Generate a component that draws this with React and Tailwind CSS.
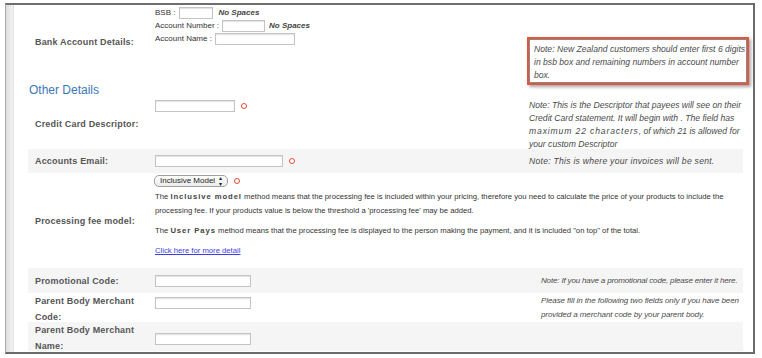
import React from 'react';

const font = { fontFamily: '"Liberation Sans", Arial, sans-serif' };

const Req = () => (
  <span className="inline-block w-[6px] h-[6px] rounded-full border-[1.5px] border-[#e8473a] bg-white ml-[6px] shrink-0" />
);

const Field = ({ w }) => (
  <span className={`inline-block ${w} h-[12px] bg-white border border-[#c4c4c4] shadow-[inset_0_1px_1px_rgba(0,0,0,0.12)] shrink-0`} />
);

const Label = ({ children }) => (
  <div className="w-[127px] shrink-0 pl-[7px] text-[9px] leading-[16px] font-bold tracking-[0.02em] text-[#555] whitespace-nowrap">
    {children}
  </div>
);

const Note = ({ children, className = '' }) => (
  <div className={`text-[8.6px] leading-[13px] italic text-[#4a4a4a] whitespace-nowrap ${className}`}>{children}</div>
);

const Mono = ({ children }) => (
  <span className="tracking-[0.12em] font-bold text-[#444]">{children}</span>
);

export default function App() {
  return (
    <div className="w-[762px] h-[358px] bg-white overflow-hidden" style={font}>
      <div className="ml-[5px] mt-[3px] w-[750px] h-[351px] border-t-2 border-r-2 border-b-2 border-l border-t-[#6e6e6e] border-r-[#6a6a6a] border-b-[#6a6a6a] border-l-[#a8a8a8] flex overflow-hidden">
        {/* left shade strip */}
        <div className="w-[8px] shrink-0 bg-gradient-to-r from-[#dedede] to-[#f2f2f2] border-r border-[#e2e2e2]" />

        <div className="flex-1 pl-[14px]">
          <div className="w-[715px]">
            {/* bank account */}
            <div className="flex h-[74px]">
              <div className="self-center shrink-0"><Label>Bank Account Details:</Label></div>
              <div className="w-[372px] shrink-0 pt-[1px] text-[8px] text-[#333]">
                <div className="flex items-center h-[13px]">
                  <span>BSB :</span>
                  <span className="ml-[4px] flex"><Field w="w-[34px]" /></span>
                  <span className="ml-[5px] italic font-semibold text-[#444]">No Spaces</span>
                </div>
                <div className="flex items-center h-[13px]">
                  <span>Account Number :</span>
                  <span className="ml-[3px] flex"><Field w="w-[43px]" /></span>
                  <span className="ml-[4px] italic font-semibold text-[#444]">No Spaces</span>
                </div>
                <div className="flex items-center h-[13px]">
                  <span>Account Name :</span>
                  <span className="ml-[3px] flex"><Field w="w-[80px]" /></span>
                </div>
              </div>
              <div className="w-[222px] shrink-0 mt-[32px]">
                <div className="border-2 border-[#e4553d] shadow-[2px_2px_3px_rgba(0,0,0,0.35)]">
                  <div className="border border-[#8a8a8a] h-[44px] pl-[4px] pt-[3px]">
                    <Note>Note: New Zealand customers should enter first 6 digits<br />in bsb box and remaining numbers in account number<br />box.</Note>
                  </div>
                </div>
              </div>
            </div>

            {/* heading */}
            <div className="h-[20px] flex items-center">
              <span className="text-[12px] font-medium text-[#3a79ba] ml-[1px] mt-[2px]">Other Details</span>
            </div>

            {/* credit card descriptor */}
            <div className="flex h-[50px]">
              <div className="self-center shrink-0"><Label>Credit Card Descriptor:</Label></div>
              <div className="w-[372px] shrink-0 pt-[1px] flex items-start">
                <span className="flex items-center"><Field w="w-[80px]" /><Req /></span>
              </div>
              <div className="w-[216px] shrink-0 pl-[2px]">
                <Note>Note: This is the Descriptor that payees will see on their<br />Credit Card statement. It will begin with . The field has<br /><span className="tracking-[0.1em]">maximum 22 characters</span>, of which 21 is allowed for<br />your custom Descriptor</Note>
              </div>
            </div>

            {/* accounts email */}
            <div className="flex h-[24px] items-center bg-[#f5f5f5]">
              <Label>Accounts Email:</Label>
              <div className="w-[372px] shrink-0 flex items-center">
                <Field w="w-[128px]" /><Req />
              </div>
              <div className="w-[216px] shrink-0 pl-[2px]">
                <Note className="tracking-[0.03em]">Note: This is where your invoices will be sent.</Note>
              </div>
            </div>

            {/* processing fee */}
            <div className="flex h-[95px]">
              <div className="self-center shrink-0"><Label>Processing fee model:</Label></div>
              <div className="flex-1 pt-[2px] text-[7.7px] leading-[14px] text-[#333] whitespace-nowrap">
                <div className="flex items-center h-[12px]">
                  <span className="-ml-[1px] h-[12px] px-[5px] flex items-center rounded-[5px] border border-[#a0a0a0] bg-gradient-to-b from-white to-[#ececec] text-[8px] text-[#222]">
                    Inclusive Model
                    <span className="ml-[4px] text-[6px] leading-[6px] flex flex-col">
                      <span>▴</span><span>▾</span>
                    </span>
                  </span>
                  <Req />
                </div>
                <p className="mt-[3px]">
                  The <Mono>Inclusive model</Mono> method means that the processing fee is included within your pricing, therefore you need to calculate the price of your products to include the<br />
                  processing fee. If your products value is below the threshold a 'processing fee' may be added.
                </p>
                <p className="mt-[6px]">
                  The <Mono>User Pays</Mono> method means that the processing fee is displayed to the person making the payment, and it is included "on top" of the total.
                </p>
                <p className="mt-[6px]">
                  <a href="#" className="text-[#3d3dea] underline">Click here for more detail</a>
                </p>
              </div>
            </div>

            {/* promotional code */}
            <div className="flex h-[25px] items-center bg-[#f5f5f5]">
              <Label>Promotional Code:</Label>
              <div className="w-[386px] shrink-0 flex items-center">
                <Field w="w-[96px]" />
              </div>
              <div className="w-[202px] shrink-0">
                <Note className="text-[8px] tracking-[-0.02em]">Note: If you have a promotional code, please enter it here.</Note>
              </div>
            </div>

            {/* parent body code */}
            <div className="flex h-[29px]">
              <Label>Parent Body Merchant<br />Code:</Label>
              <div className="w-[386px] shrink-0 pt-[4px] flex items-start">
                <Field w="w-[96px]" />
              </div>
              <div className="w-[202px] shrink-0 pt-[1px]">
                <Note className="text-[8px] tracking-[-0.01em] leading-[14px]">Please fill in the following two fields only if you have been<br />provided a merchant code by your parent body.</Note>
              </div>
            </div>

            {/* parent body name */}
            <div className="flex h-[29px] bg-[#f5f5f5]">
              <Label>Parent Body Merchant<br />Name:</Label>
              <div className="w-[386px] shrink-0 pt-[11px] flex items-start">
                <Field w="w-[96px]" />
              </div>
              <div className="w-[202px] shrink-0" />
            </div>
          </div>
        </div>
      </div>
    </div>
  );
}
